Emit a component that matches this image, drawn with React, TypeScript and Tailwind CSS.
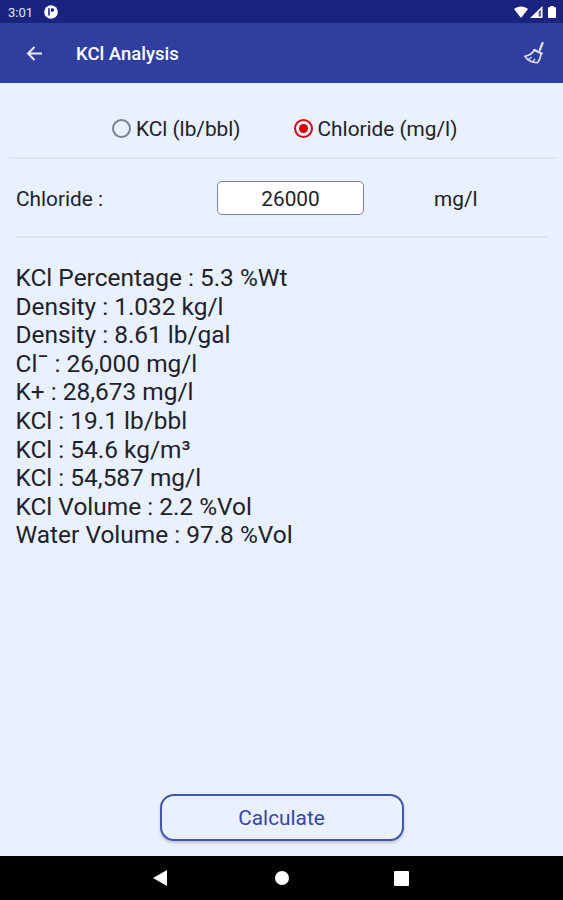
import { useState } from "react";

const results = [
    "KCl Percentage : 5.3 %Wt",
    "Density : 1.032 kg/l",
    "Density : 8.61 lb/gal",
    "Cl¯ : 26,000 mg/l",
    "K+ : 28,673 mg/l",
    "KCl : 19.1 lb/bbl",
    "KCl : 54.6 kg/m³",
    "KCl : 54,587 mg/l",
    "KCl Volume : 2.2 %Vol",
    "Water Volume : 97.8 %Vol",
];

function StatusBar() {
    return (
        <div className="flex h-[23px] shrink-0 items-center bg-[#1a237e] pl-2 pr-[7px] pt-px text-white">
            <span className="pt-px text-[13px] leading-none text-[#e3e5f3]">3:01</span>
            <svg viewBox="0 0 14 14" className="ml-[11px] size-[14px]">
                <circle cx="7" cy="7" r="6.8" fill="#fff" />
                <path d="M4.2 3.2h1.6v7.2H4.2zM7 3.2h1.5a1.8 1.8 0 0 1 0 3.600H7z" fill="#1a237e" />
            </svg>
            <svg viewBox="0 0 14 12" className="ml-auto h-3 w-[14px]">
                <path d="M0 3C3.8-.5 10.2-.5 14 3L7 12z" fill="#fff" />
            </svg>
            <svg viewBox="0 0 13 12" className="ml-0.5 h-3 w-[13px]">
                <path d="M12.5 0v12H0z" fill="#fff" />
                <path d="M11 3.6v6.900H8.600V5.800z" fill="#5a61a3" />
            </svg>
            <svg viewBox="0 0 8 12" className="ml-[5px] h-3 w-2">
                <path d="M2.2 0h3.6v1.2H8V12H0V1.2h2.2z" fill="#fff" />
            </svg>
        </div>
    );
}

function AppBar({ onClear }: { onClear: () => void }) {
    return (
        <header className="flex h-[60px] shrink-0 items-center bg-[#303f9f] pl-[26px] pr-[18px] text-white">
            <button aria-label="Back">
                <svg viewBox="0 0 17 15" className="h-[15px] w-[17px]" fill="none" stroke="#e8eaf6" strokeWidth="2">
                    <path d="M16 7.5H2M8.500 1L2 7.5 8.500 14" />
                </svg>
            </button>
            <h1 className="ml-[33px] pt-0.5 text-[18.5px] font-medium leading-6">KCl Analysis</h1>
            <button aria-label="Clear" className="ml-auto" onClick={onClear}>
                <svg
                    viewBox="0 0 22 24"
                    className="h-6 w-[22px]"
                    fill="none"
                    stroke="#dfe2f3"
                    strokeWidth="1.6"
                    strokeLinecap="round"
                    strokeLinejoin="round"
                >
                    <path d="M19.600 2l-2.800 7" strokeWidth="2.200" />
                    <path d="M11.300 9l7.400 3.600" strokeWidth="2.200" />
                    <path d="M11.300 9C9.500 12.300 6.500 14.600 1.800 15.200c2.400 4 6.800 6.500 12.700 6.500 2.300-2.700 3.300-5.500 3.500-9.200" />
                    <path d="M6 18l2.300-1.500M10.300 20l1.500-1.800" strokeWidth="1.200" />
                </svg>
            </button>
        </header>
    );
}

type RadioProps = { label: string; checked: boolean; onChange: () => void };

function Radio({ label, checked, onChange }: RadioProps) {
    return (
        <label className="flex items-center gap-[5px] text-[20.8px] leading-6 text-[#20222a]">
            <input type="radio" name="unit" className="sr-only" checked={checked} onChange={onChange} />
            <span
                className={
                    checked
                        ? "flex size-[19px] items-center justify-center rounded-full border-2 border-[#d50d12]"
                        : "flex size-[19px] items-center justify-center rounded-full border-2 border-[#7c808b]"
                }
            >
                {checked && <span className="size-[9px] rounded-full bg-[#d50000]" />}
            </span>
            <span className="pt-0.5">{label}</span>
        </label>
    );
}

export default function App() {
    const [unit, setUnit] = useState("chloride");
    const [value, setValue] = useState("26000");

    return (
        <div className="flex h-[900px] w-[563px] flex-col overflow-hidden bg-[#e9f0ff] font-['Roboto',sans-serif]">
            <StatusBar />
            <AppBar onClear={() => setValue("")} />

            <main className="flex flex-1 flex-col">
                {/* Unit selection */}
                <div className="ml-[9px] mr-2 flex h-[76px] items-center gap-[53px] border-b-2 border-[#e0e4ef] pl-[103px] pt-4">
                    <Radio label="KCl (lb/bbl)" checked={unit === "kcl"} onChange={() => setUnit("kcl")} />
                    <Radio label="Chloride (mg/l)" checked={unit === "chloride"} onChange={() => setUnit("chloride")} />
                </div>

                {/* Input row */}
                <div className="ml-4 mr-[15px] flex h-[79px] items-center border-b-2 border-[#e0e4ef] text-[20.8px] leading-6 text-[#20222a]">
                    <span className="w-[201px] pt-0.5">Chloride :</span>
                    <input
                        className="h-[34px] w-[147px] rounded-[5px] border border-[#7c7fa6] bg-white pt-0.5 text-center outline-none"
                        value={value}
                        onChange={(e) => setValue(e.target.value)}
                    />
                    <span className="ml-[70px] pt-0.5">mg/l</span>
                </div>

                {/* Results */}
                <div className="pl-[15.5px] pt-[26px] text-[24.45px] leading-[28.6px] text-[#20222a]">
                    {results.map((line) => (
                        <p key={line}>{line}</p>
                    ))}
                </div>

                <button className="mx-auto mb-[15px] mt-auto h-[47px] w-[244px] rounded-[14px] border-2 border-[#4555ae] bg-[#e9f0ff] pt-0.5 text-[20.8px] text-[#3846a5] shadow-[0_2px_3px_rgba(0,0,0,0.2)]">
                    Calculate
                </button>
            </main>

            {/* System navigation */}
            <nav className="flex h-11 shrink-0 items-center bg-black pl-[153px]">
                <svg viewBox="0 0 15 16" className="h-4 w-[15px]">
                    <path d="M0 8L14 0v16z" fill="#fff" />
                </svg>
                <span className="ml-[107px] size-[14px] rounded-full bg-white" />
                <span className="ml-[105px] size-[15px] rounded-[1px] bg-white" />
            </nav>
        </div>
    );
}
